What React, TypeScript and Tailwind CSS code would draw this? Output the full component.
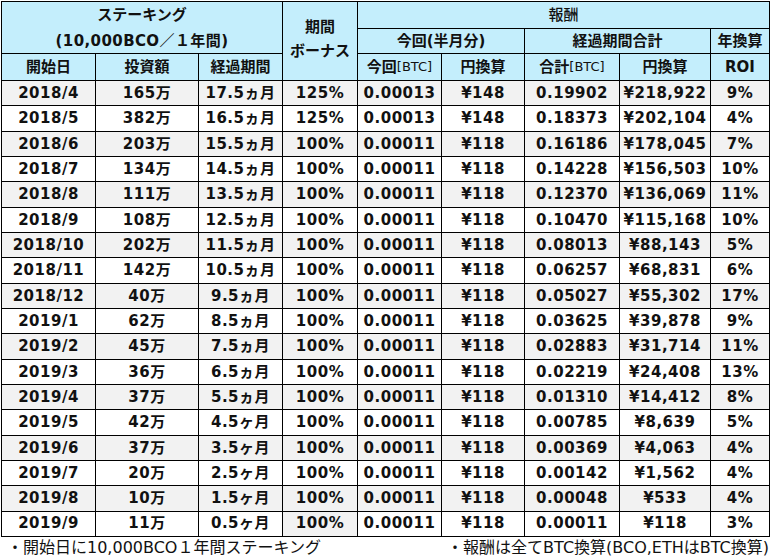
import type { ReactNode } from "react";

const rows: string[][] = [
  ["2018/4", "165万", "17.5ヵ月", "125%", "0.00013", "¥148", "0.19902", "¥218,922", "9%"],
  ["2018/5", "382万", "16.5ヵ月", "125%", "0.00013", "¥148", "0.18373", "¥202,104", "4%"],
  ["2018/6", "203万", "15.5ヵ月", "100%", "0.00011", "¥118", "0.16186", "¥178,045", "7%"],
  ["2018/7", "134万", "14.5ヵ月", "100%", "0.00011", "¥118", "0.14228", "¥156,503", "10%"],
  ["2018/8", "111万", "13.5ヵ月", "100%", "0.00011", "¥118", "0.12370", "¥136,069", "11%"],
  ["2018/9", "108万", "12.5ヵ月", "100%", "0.00011", "¥118", "0.10470", "¥115,168", "10%"],
  ["2018/10", "202万", "11.5ヵ月", "100%", "0.00011", "¥118", "0.08013", "¥88,143", "5%"],
  ["2018/11", "142万", "10.5ヵ月", "100%", "0.00011", "¥118", "0.06257", "¥68,831", "6%"],
  ["2018/12", "40万", "9.5ヵ月", "100%", "0.00011", "¥118", "0.05027", "¥55,302", "17%"],
  ["2019/1", "62万", "8.5ヵ月", "100%", "0.00011", "¥118", "0.03625", "¥39,878", "9%"],
  ["2019/2", "45万", "7.5ヵ月", "100%", "0.00011", "¥118", "0.02883", "¥31,714", "11%"],
  ["2019/3", "36万", "6.5ヵ月", "100%", "0.00011", "¥118", "0.02219", "¥24,408", "13%"],
  ["2019/4", "37万", "5.5ヵ月", "100%", "0.00011", "¥118", "0.01310", "¥14,412", "8%"],
  ["2019/5", "42万", "4.5ヶ月", "100%", "0.00011", "¥118", "0.00785", "¥8,639", "5%"],
  ["2019/6", "37万", "3.5ヶ月", "100%", "0.00011", "¥118", "0.00369", "¥4,063", "4%"],
  ["2019/7", "20万", "2.5ヶ月", "100%", "0.00011", "¥118", "0.00142", "¥1,562", "4%"],
  ["2019/8", "10万", "1.5ヶ月", "100%", "0.00011", "¥118", "0.00048", "¥533", "4%"],
  ["2019/9", "11万", "0.5ヶ月", "100%", "0.00011", "¥118", "0.00011", "¥118", "3%"],
];

function Head({ className = "", children }: { className?: string; children: ReactNode }) {
  return (
    <div
      className={`bg-[#c4eefc] border-r border-b border-black flex flex-col items-center justify-center ${className}`}
    >
      {children}
    </div>
  );
}

export default function App() {
  return (
    <div className="w-[772px] h-[560px] bg-white text-[#111] font-['Verdana','DejaVu_Sans','Noto_Sans_CJK_JP',sans-serif] overflow-hidden">
      <div className="ml-px mt-px w-[769px] grid grid-cols-[94px_103px_84px_75px_84px_83px_95px_91px_59px] grid-rows-[27px_25px_27px_repeat(18,25.33px)] border-l border-t border-black text-[15px] font-bold">
        {/* header */}
        <Head className="col-span-3 row-span-2 leading-[26px]">
          <span>ステーキング</span>
          <span className="tracking-[0.4px]">(10,000BCO／１年間)</span>
        </Head>
        <Head className="row-span-3 leading-[24px] pb-1">
          <span>期間</span>
          <span>ボーナス</span>
        </Head>
        <Head className="col-span-5 font-medium">報酬</Head>
        <Head className="col-span-2">今回(半月分)</Head>
        <Head className="col-span-2">経過期間合計</Head>
        <Head>年換算</Head>
        <Head>開始日</Head>
        <Head>投資額</Head>
        <Head>経過期間</Head>
        <Head className="flex-row items-baseline">
          <span>今回</span>
          <span className="text-[13px] font-normal">[BTC]</span>
        </Head>
        <Head>円換算</Head>
        <Head className="flex-row items-baseline">
          <span>合計</span>
          <span className="text-[13px] font-normal">[BTC]</span>
        </Head>
        <Head>円換算</Head>
        <Head>ROI</Head>

        {/* data */}
        {rows.map((row, i) =>
          row.map((cell, j) => {
            const gray = i % 2 === 0 || (j === 3 && i === rows.length - 1);
            return (
              <div
                key={`${i}-${j}`}
                className={`border-r border-b border-black flex items-center justify-center whitespace-nowrap tracking-[0.5px] ${
                  gray ? "bg-[#f2f2f2]" : "bg-white"
                }`}
              >
                {cell}
              </div>
            );
          }),
        )}
      </div>

      <div className="flex justify-between items-center h-[22px] pl-[7px] pr-[3px] text-[16px] leading-none">
        <span>・開始日に10,000BCO１年間ステーキング</span>
        <span>・報酬は全てBTC換算(BCO,ETHはBTC換算)</span>
      </div>
    </div>
  );
}
